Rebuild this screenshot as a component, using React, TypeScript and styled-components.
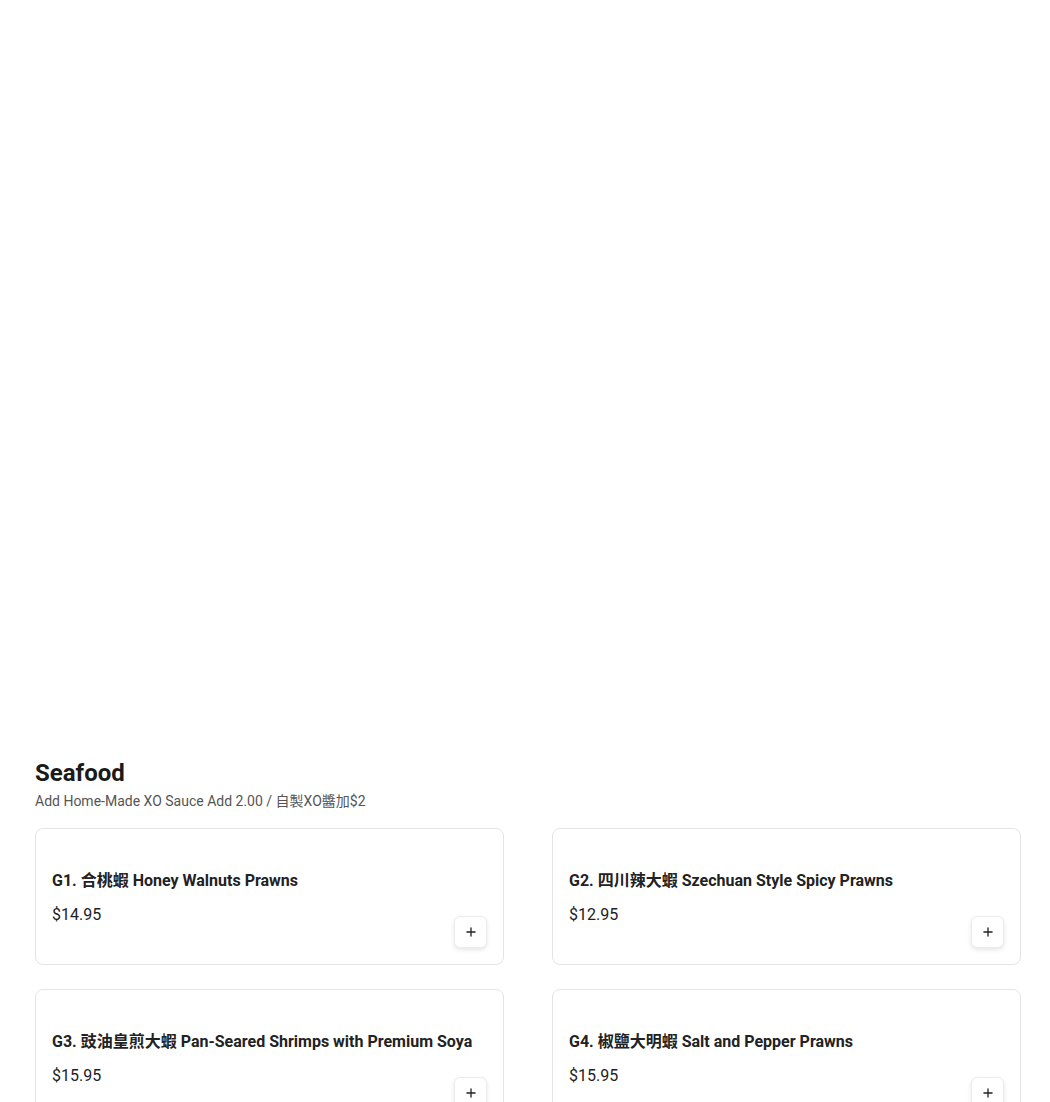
import styled, { createGlobalStyle } from "styled-components";
import { Plus } from "lucide-react";

type Dish = {
  code: string;
  name: string;
  price: number;
};

const dishes: Dish[] = [
  { code: "G1.", name: "合桃蝦 Honey Walnuts Prawns", price: 14.95 },
  { code: "G2.", name: "四川辣大蝦 Szechuan Style Spicy Prawns", price: 12.95 },
  { code: "G3.", name: "豉油皇煎大蝦 Pan-Seared Shrimps with Premium Soya", price: 15.95 },
  { code: "G4.", name: "椒鹽大明蝦 Salt and Pepper Prawns", price: 15.95 },
];

const GlobalStyle = createGlobalStyle`
  * { box-sizing: border-box; }
  body {
    margin: 0;
    background: #fff;
    font-family: Roboto, "Noto Sans CJK TC", sans-serif;
    color: #1f1f1f;
  }
`;

const Page = styled.main`
  padding: 0 29px 0 35px;
`;

const Hero = styled.div`
  height: 757px;
`;

const Section = styled.section`
  display: flex;
  flex-direction: column;
`;

const Heading = styled.h2`
  margin: 0;
  font-size: 24px;
  line-height: 32px;
  font-weight: 700;
  color: #1a1a1a;
`;

const Note = styled.p`
  margin: 2px 0 0;
  font-size: 14px;
  line-height: 20px;
  color: #555;
`;

const Grid = styled.div`
  margin-top: 17px;
  display: grid;
  grid-template-columns: 1fr 1fr;
  align-items: start;
  column-gap: 48px;
  row-gap: 24px;
`;

const Card = styled.article`
  display: grid;
  grid-template-columns: 1fr auto;
  grid-template-areas:
    "title title"
    "price add";
  padding: 16px;
  border: 1px solid #e4e4e4;
  border-radius: 8px;
  background: #fff;
`;

const Title = styled.h3`
  grid-area: title;
  margin: 0;
  padding-top: 24px;
  margin-bottom: 10px;
  font-size: 16px;
  line-height: 24px;
  font-weight: 700;
  color: #222;
`;

const Price = styled.span`
  grid-area: price;
  align-self: start;
  font-size: 16px;
  line-height: 24px;
  color: #222;
`;

const AddButton = styled.button`
  grid-area: add;
  align-self: end;
  margin-top: 13px;
  width: 33px;
  height: 32px;
  display: flex;
  align-items: center;
  justify-content: center;
  border: 1px solid #ececec;
  border-radius: 6px;
  background: #fff;
  color: #222;
  box-shadow: 0 2px 4px rgba(0, 0, 0, 0.1);
  cursor: pointer;
  padding: 0;
`;

export default function App() {
  return (
    <>
      <GlobalStyle />
      <Page>
        <Hero />
        <Section>
          <Heading>Seafood</Heading>
          <Note>Add Home-Made XO Sauce Add 2.00 / 自製XO醬加$2</Note>
          <Grid>
            {dishes.map((d) => (
              <Card key={d.code}>
                <Title>
                  {d.code} {d.name}
                </Title>
                <Price>${d.price.toFixed(2)}</Price>
                <AddButton aria-label="Add">
                  <Plus size={14} strokeWidth={2.25} />
                </AddButton>
              </Card>
            ))}
          </Grid>
        </Section>
      </Page>
    </>
  );
}
